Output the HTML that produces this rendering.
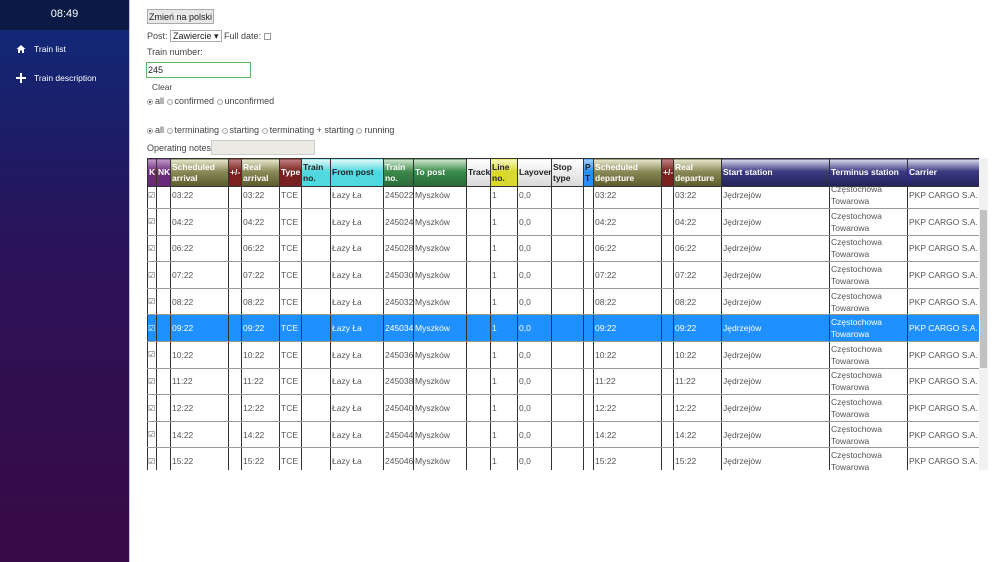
<!DOCTYPE html>
<html><head><meta charset="utf-8"><style>
*{box-sizing:border-box;margin:0;padding:0}
body{width:1000px;height:562px;overflow:hidden;background:#fff;font-family:"Liberation Sans",Arial,sans-serif;font-size:9px;color:#444;position:relative}
#side{position:absolute;left:0;top:0;width:130px;height:562px;background:linear-gradient(#122877 30px,#1a1f6a 110px,#2c1258 260px,#380a45 562px);border-right:1px solid #c8c8e0}
#clock{height:30px;background:#0b1a45;color:#fff;font-size:11px;text-align:center;line-height:29px}
.nav{position:absolute;left:16px;color:#fff;font-size:8.5px;display:flex;align-items:center}
.nav svg{margin-right:8px}
.a{position:absolute}
button{position:absolute;left:147px;top:9px;width:67px;height:15px;background:#e8e8e8;border:1px solid #aaa;font:9px "Liberation Sans",sans-serif;color:#222}
.rad{display:inline-block;width:6px;height:6px;border:1px solid #aaa;border-radius:50%;margin:0 2px 0 0;vertical-align:-1px;background:#f4f4f4}
.rad.on{background:radial-gradient(#555 35%,#f4f4f4 45%)}
#hd{position:absolute;left:147px;top:158px;width:832px}
#tbl{position:absolute;left:147px;top:186px;width:832px;height:284px;overflow:hidden}
#tbl table{margin-top:-4px}
table{border-collapse:collapse;table-layout:fixed;width:832px}
th{height:28px;font-size:8.5px;font-weight:bold;color:#fff;text-align:left;padding:0 1px;border:1px solid #333;line-height:11px;overflow:hidden;white-space:nowrap}
td{height:26.6px;border-left:1px solid #333;border-right:1px solid #333;border-bottom:1px solid #999;padding:0 1px;white-space:nowrap;overflow:hidden;color:#555;font-size:8.5px;vertical-align:middle}
td.c{font-size:8px;padding:0}
td.t{white-space:normal;line-height:12px}
tr.sel td{background:#1e90ff;color:#fff}
.pu{background:linear-gradient(#c09ac8,#6a2a7a 45%)}
.ol{background:linear-gradient(#e8e8d0,#8a8a58 45%,#5a5a2a)}
.rd{background:linear-gradient(#c08080,#7a2020 45%)}
.cy{background:linear-gradient(#e0fafa,#50d8e0 45%);color:#222!important}
.gr{background:linear-gradient(#d0e8d0,#3a8a4a 45%,#2a6a3a)}
.lg{background:linear-gradient(#fff,#d8d8d8);color:#222!important}
.ye{background:linear-gradient(#f8f8c0,#d8d830 45%);color:#222!important}
.bl{background:linear-gradient(#a0d0ff,#2a90f0 45%);color:#222!important}
.nv{background:linear-gradient(#d8d8ec,#3a3a80 45%,#22225a)}
#sb{position:absolute;left:979px;top:158px;width:9px;height:312px;background:#f1f1f1}
#sb div{position:absolute;left:1px;top:52px;width:7px;height:158px;background:#c1c1c1}
</style></head><body>
<div id="side">
<div id="clock">08:49</div>
<div class="nav" style="top:44px"><svg width="10" height="10" viewBox="0 0 10 10"><path d="M5 1L0.5 5H2V9H4V6.5H6V9H8V5H9.5Z" fill="#fff"/></svg>Train list</div>
<div class="nav" style="top:73px"><svg width="10" height="10" viewBox="0 0 10 10"><path d="M4 0H6V4H10V6H6V10H4V6H0V4H4Z" fill="#fff"/></svg>Train description</div>
</div>
<button>Zmień na polski</button>
<div class="a" style="left:147px;top:30px">Post: <span style="display:inline-block;border:1px solid #aaa;padding:0 2px;color:#222;height:12px;line-height:11px">Zawiercie ▾</span> Full date: <span style="display:inline-block;width:7px;height:7px;border:1px solid #999;vertical-align:-1px"></span></div>
<div class="a" style="left:147px;top:47px">Train number:</div>
<div class="a" style="left:146px;top:62px;width:105px;height:16px;border:1px solid #5cb85c;padding:2px 1px;color:#222">245</div>
<div class="a" style="left:152px;top:82px;font-size:8.5px">Clear</div>
<div class="a" style="left:147px;top:96px"><span class="rad on"></span>all <span class="rad"></span>confirmed <span class="rad"></span>unconfirmed</div>
<div class="a" style="left:147px;top:125px"><span class="rad on"></span>all <span class="rad"></span>terminating <span class="rad"></span>starting <span class="rad"></span>terminating + starting <span class="rad"></span>running</div>
<div class="a" style="left:147px;top:143px">Operating notes:</div>
<div class="a" style="left:211px;top:140px;width:104px;height:15px;background:#ebebe4;border:1px solid #ccc"></div>
<div id="hd"><table>
<colgroup><col width="9"><col width="14"><col width="58"><col width="13"><col width="38"><col width="22"><col width="29"><col width="53"><col width="30"><col width="53"><col width="24"><col width="27"><col width="34"><col width="32"><col width="10"><col width="68"><col width="12"><col width="48"><col width="108"><col width="78"><col width="72"></colgroup>
<tr><th class="pu">K</th><th class="pu">NK</th><th class="ol">Scheduled<br>arrival</th><th class="rd">+/-</th><th class="ol">Real<br>arrival</th><th class="rd">Type</th><th class="cy">Train<br>no.</th><th class="cy">From post</th><th class="gr">Train<br>no.</th><th class="gr">To post</th><th class="lg">Track</th><th class="ye">Line<br>no.</th><th class="lg">Layover</th><th class="lg">Stop<br>type</th><th class="bl">P<br>T</th><th class="ol">Scheduled<br>departure</th><th class="rd">+/-</th><th class="ol">Real<br>departure</th><th class="nv">Start station</th><th class="nv">Terminus station</th><th class="nv">Carrier</th></tr>
</table></div>
<div id="tbl"><table>
<colgroup><col width="9"><col width="14"><col width="58"><col width="13"><col width="38"><col width="22"><col width="29"><col width="53"><col width="30"><col width="53"><col width="24"><col width="27"><col width="34"><col width="32"><col width="10"><col width="68"><col width="12"><col width="48"><col width="108"><col width="78"><col width="72"></colgroup>
<tbody id="b"></tbody>
</table></div>
<div id="sb"><div></div></div>
<script>
var t=[["03:22","245022"],["04:22","245024"],["06:22","245028"],["07:22","245030"],["08:22","245032"],["09:22","245034"],["10:22","245036"],["11:22","245038"],["12:22","245040"],["14:22","245044"],["15:22","245046"]];
var h="";t.forEach(function(r,i){h+='<tr'+(i==5?' class="sel"':'')+'><td class="c">☑</td><td></td><td>'+r[0]+'</td><td></td><td>'+r[0]+'</td><td>TCE</td><td></td><td>Łazy Ła</td><td>'+r[1]+'</td><td>Myszków</td><td></td><td>1</td><td>0,0</td><td></td><td></td><td>'+r[0]+'</td><td></td><td>'+r[0]+'</td><td>Jędrzejów</td><td class="t">Częstochowa Towarowa</td><td>PKP CARGO S.A.</td></tr>';});
document.getElementById("b").innerHTML=h;
</script>
</body></html>
